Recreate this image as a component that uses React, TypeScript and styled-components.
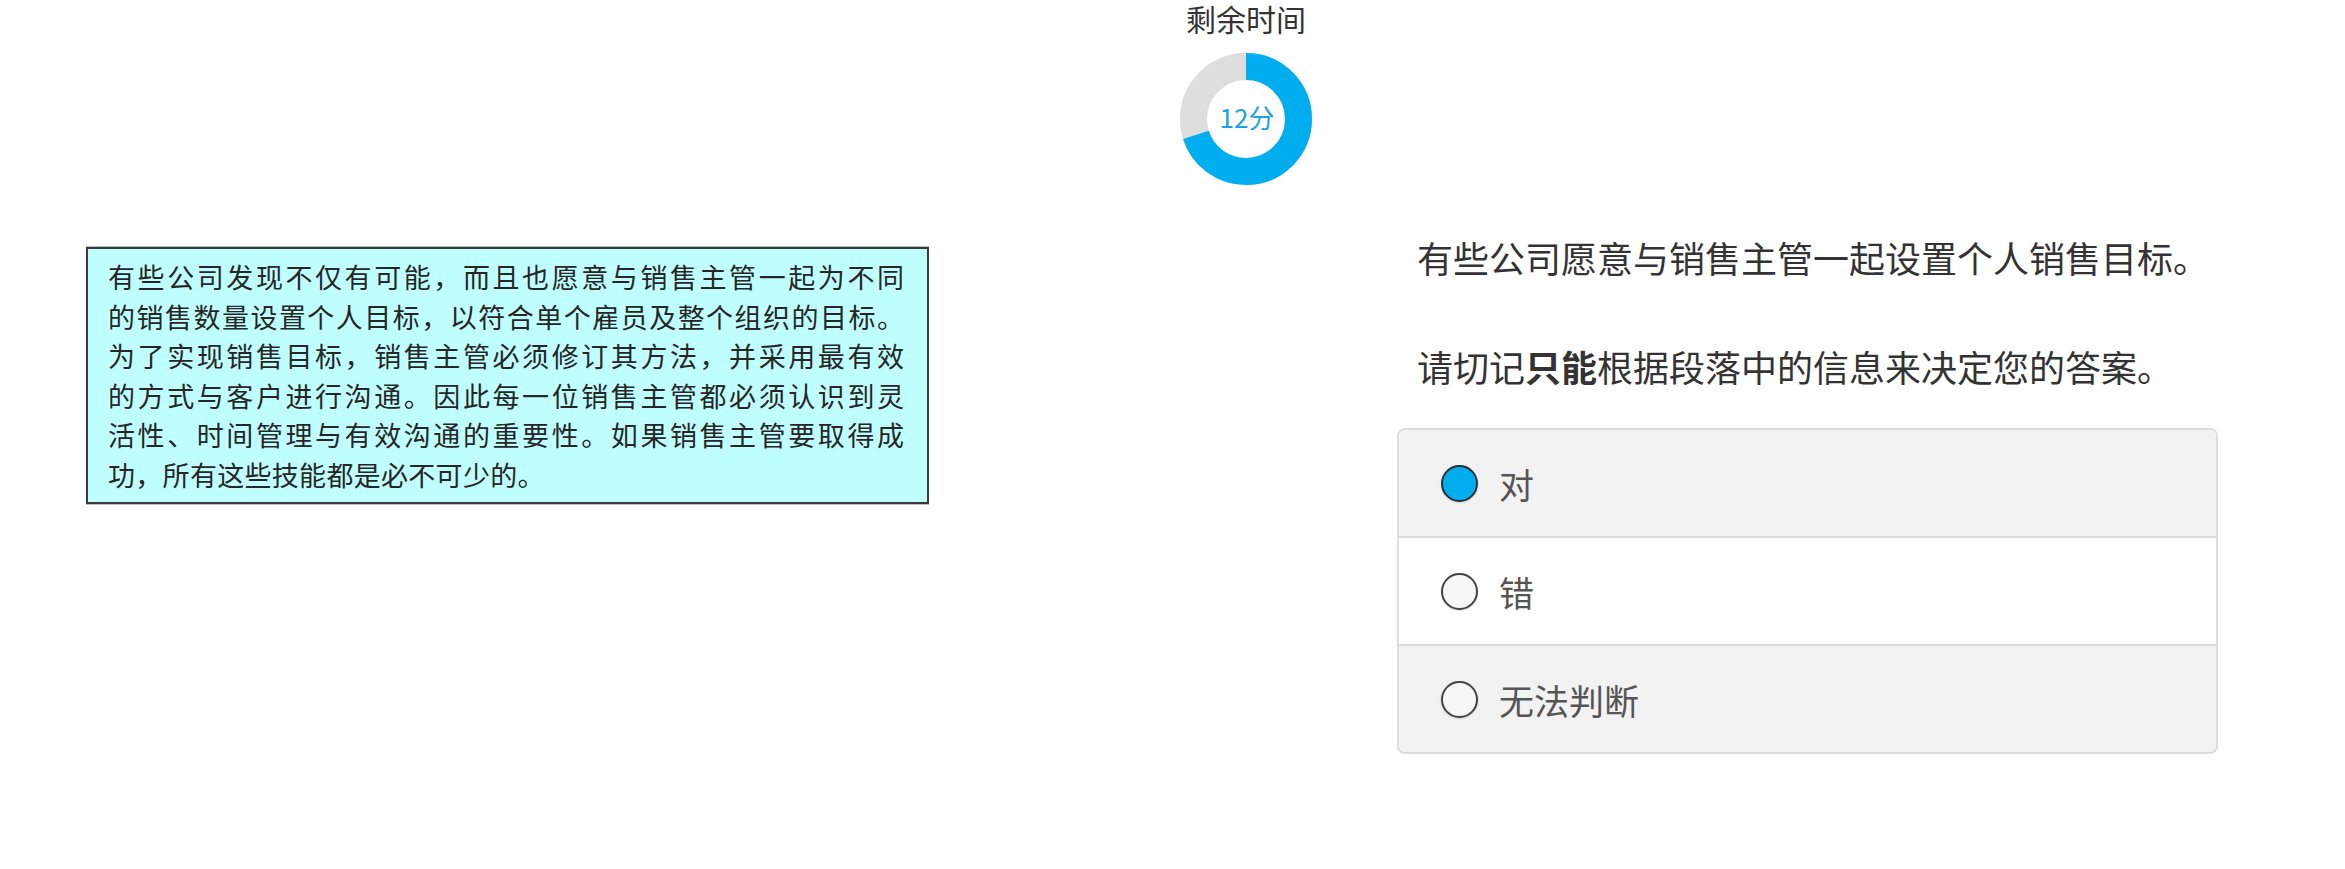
import * as React from 'react';
import styled, { createGlobalStyle } from 'styled-components';

const GlobalStyle = createGlobalStyle`
  html, body {
    margin: 0;
    padding: 0;
    background: #ffffff;
  }
  body {
    font-family: "Noto Sans CJK SC", "Noto Sans", sans-serif;
    color: #333333;
  }
`

const Page = styled.div`
  width: 100%;
  padding-bottom: 40px;
`
const Header = styled.div`
  display: flex;
  flex-direction: column;
  align-items: center;
  padding-left: 147px;
`
const TimerTitle = styled.p`
  margin: 0;
  font-size: 30px;
  line-height: 36px;
  color: #333333;
`
const DonutWrap = styled.div`
  margin-top: 16px;
  width: 134px;
  height: 134px;
`
const Main = styled.div`
  display: flex;
  align-items: flex-start;
  padding-left: 86px;
  margin-top: 46px;
`
const PassageBox = styled.div`
  box-sizing: border-box;
  width: 843px;
  margin-top: 15px;
  padding: 8px 0 8px 20px;
  background: #c0ffff;
  border: 2px solid #3a3a3a;
  box-shadow: 0 -1px 0 #bdbdbd, 0 1px 0 #bdbdbd;
`
const PassageText = styled.div`
  width: 796px;
  font-size: 27px;
  line-height: 39.5px;
  color: #262626;
`
const PassageLine = styled.div<{ $last?: boolean }>`
  text-align: justify;
  text-align-last: ${p => (p.$last ? 'left' : 'justify')};
  letter-spacing: ${p => (p.$last ? '0.3px' : '0')};
  white-space: nowrap;
`
const QuestionColumn = styled.div`
  margin-left: 468px;
  width: 821px;
`
const Statement = styled.p<{ $gap: number }>`
  margin: 0 0 ${p => p.$gap}px 0;
  padding-left: 20px;
  font-size: 36px;
  line-height: 50px;
  color: #333333;
  white-space: nowrap;
  b {
    font-weight: 700;
  }
`
const Options = styled.div`
  box-sizing: border-box;
  width: 821px;
  border: 2px solid #dddddd;
  border-radius: 8px;
  overflow: hidden;
`
const OptionRow = styled.label<{ $striped: boolean; $first: boolean }>`
  display: flex;
  align-items: center;
  height: 106px;
  padding-left: 42px;
  background: ${p => (p.$striped ? '#f2f2f2' : '#ffffff')};
  border-top: ${p => (p.$first ? 'none' : '2px solid #dddddd')};
  cursor: pointer;
`
const Radio = styled.span<{ $checked: boolean }>`
  box-sizing: border-box;
  width: 37px;
  height: 37px;
  border-radius: 50%;
  border: 2px solid ${p => (p.$checked ? '#263238' : '#444444')};
  background: ${p => (p.$checked ? '#00aeef' : '#f6f6f6')};
  box-shadow: 0 1px 2px rgba(0, 0, 0, 0.15);
  flex-shrink: 0;
`
const OptionLabel = styled.span`
  margin-left: 21px;
  font-size: 35px;
  color: #555555;
`

const Donut: React.FC<{ fraction: number; label: string }> = ({ fraction, label }) => {
  const r = 52.5;
  const c = 2 * Math.PI * r;
  return (
    <svg width="134" height="134" viewBox="0 0 134 134">
      <circle cx="67" cy="67" r={r} fill="none" stroke="#dedede" strokeWidth="27" />
      <circle
        cx="67"
        cy="67"
        r={r}
        fill="none"
        stroke="#00aeef"
        strokeWidth="27"
        strokeDasharray={`${c * fraction} ${c}`}
        transform="rotate(-90 67 67)"
      />
      <text
        x="68"
        y="76"
        textAnchor="middle"
        fontSize="26"
        fill="#1aa3e3"
        fontFamily='"Noto Sans CJK SC", "Noto Sans", sans-serif'
      >
        {label}
      </text>
    </svg>
  );
};

const passage = [
  '有些公司发现不仅有可能，而且也愿意与销售主管一起为不同',
  '的销售数量设置个人目标，以符合单个雇员及整个组织的目标。',
  '为了实现销售目标，销售主管必须修订其方法，并采用最有效',
  '的方式与客户进行沟通。因此每一位销售主管都必须认识到灵',
  '活性、时间管理与有效沟通的重要性。如果销售主管要取得成',
  '功，所有这些技能都是必不可少的。',
];

const options = ['对', '错', '无法判断'];

const App: React.FC = () => {
  const [selected, setSelected] = React.useState(0);
  return (
    <Page>
      <GlobalStyle />
      <Header>
        <TimerTitle>剩余时间</TimerTitle>
        <DonutWrap>
          <Donut fraction={0.7} label="12分" />
        </DonutWrap>
      </Header>
      <Main>
        <PassageBox>
          <PassageText>
            {passage.map((line, i) => (
              <PassageLine key={i} $last={i === passage.length - 1}>
                {line}
              </PassageLine>
            ))}
          </PassageText>
        </PassageBox>
        <QuestionColumn>
          <Statement $gap={59}>有些公司愿意与销售主管一起设置个人销售目标。</Statement>
          <Statement $gap={37}>
            请切记<b>只能</b>根据段落中的信息来决定您的答案。
          </Statement>
          <Options>
            {options.map((opt, i) => (
              <OptionRow
                key={opt}
                $striped={i % 2 === 0}
                $first={i === 0}
                onClick={() => setSelected(i)}
              >
                <Radio $checked={selected === i} />
                <OptionLabel>{opt}</OptionLabel>
              </OptionRow>
            ))}
          </Options>
        </QuestionColumn>
      </Main>
    </Page>
  );
};

export default App;
